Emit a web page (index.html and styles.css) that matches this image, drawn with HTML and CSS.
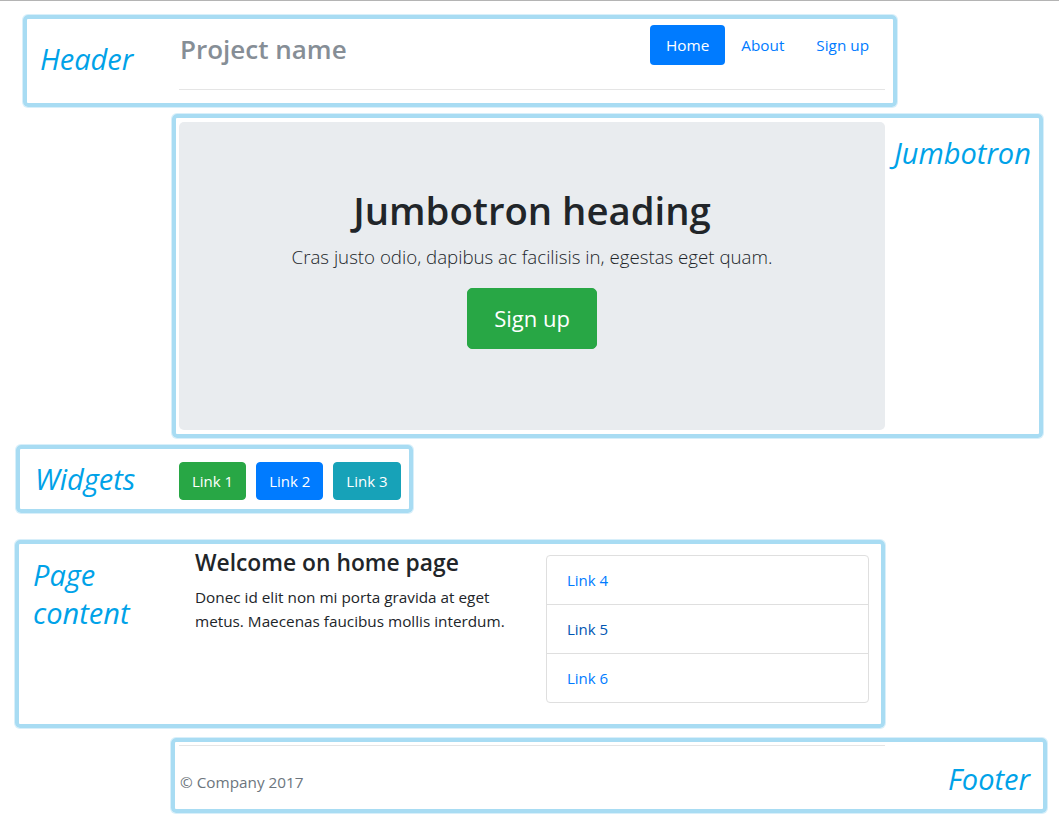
FILE: index.html
```html
<!DOCTYPE html>
<html lang="en">
<head>
<meta charset="utf-8">
<title>Narrow jumbotron layout</title>
<link rel="stylesheet" href="styles.css">
</head>
<body>
<div class="topline"></div>
<div class="container">
  <header class="header">
    <h3 class="brand">Project name</h3>
    <nav class="nav">
      <a class="nav-link active" href="#">Home</a>
      <a class="nav-link" href="#">About</a>
      <a class="nav-link" href="#">Sign up</a>
    </nav>
  </header>

  <section class="jumbotron">
    <h1 class="jumbo-title">Jumbotron heading</h1>
    <p class="lead">Cras justo odio, dapibus ac facilisis in, egestas eget quam.</p>
    <p class="jumbo-action"><a class="btn btn-lg btn-success" href="#">Sign up</a></p>
  </section>

  <section class="widgets">
    <a class="btn btn-success" href="#">Link 1</a>
    <a class="btn btn-primary" href="#">Link 2</a>
    <a class="btn btn-info" href="#">Link 3</a>
  </section>

  <section class="marketing">
    <div class="intro">
      <h4 class="intro-title">Welcome on home page</h4>
      <p class="intro-text">Donec id elit non mi porta gravida at eget metus. Maecenas faucibus mollis interdum.</p>
    </div>
    <div class="list-group">
      <a class="list-item" href="#">Link 4</a>
      <a class="list-item hover" href="#">Link 5</a>
      <a class="list-item" href="#">Link 6</a>
    </div>
  </section>

  <footer class="footer">
    <p>© Company 2017</p>
  </footer>
</div>

<div class="notes">
  <div class="frame frame-header"></div>
  <div class="frame frame-jumbo"></div>
  <div class="frame frame-widgets"></div>
  <div class="frame frame-content"></div>
  <div class="frame frame-footer"></div>
  <span class="label label-header">Header</span>
  <span class="label label-jumbo">Jumbotron</span>
  <span class="label label-widgets">Widgets</span>
  <span class="label label-content">Page<br>content</span>
  <span class="label label-footer">Footer</span>
</div>
</body>
</html>
```

FILE: styles.css
```css
* { box-sizing: border-box; }

html, body {
  margin: 0;
  padding: 0;
  background: #fff;
}

body {
  font-family: "Segoe UI", "Open Sans", "Noto Sans", sans-serif;
  font-size: 16px;
  line-height: 24px;
  color: #212529;
}

a { text-decoration: none; }

.topline {
  height: 1px;
  background: #b4b4b4;
}

.container {
  width: 706px;
  margin-left: 179px;
}

/* Header */
.header {
  display: flex;
  justify-content: space-between;
  align-items: flex-start;
  padding-top: 24px;
  padding-bottom: 16px;
  border-bottom: 1px solid #e5e5e5;
  margin-bottom: 32px;
}

.brand {
  margin: 0 0 0 1px;
  font-size: 26px;
  font-weight: 600;
  line-height: 48px;
  color: #868e96;
}

.nav {
  display: flex;
}

.nav-link {
  display: block;
  padding: 8px 16px;
  font-size: 15.3px;
  line-height: 24px;
  color: #007bff;
  border-radius: 4px;
}

.nav-link.active {
  background: #007bff;
  color: #fff;
}

/* Jumbotron */
.jumbotron {
  background: #e9ecef;
  border-radius: 5px;
  padding: 64px 32px 65px;
  text-align: center;
  margin-bottom: 32px;
}

.jumbo-title {
  margin: 0 0 8px;
  font-size: 38.3px;
  line-height: 48px;
  font-weight: 600;
}

.lead {
  margin: 0 0 16px;
  font-size: 18.7px;
  line-height: 30px;
  font-weight: 300;
}

.jumbo-action {
  margin: 0 0 16px;
  line-height: 0;
}

.btn {
  display: inline-block;
  color: #fff;
  border: 1px solid transparent;
  border-radius: 4px;
  padding: 6px 12px;
  font-size: 15px;
  line-height: 24px;
}

.btn-lg {
  padding: 15px 26px;
  font-size: 22px;
  line-height: 29px;
  border-radius: 5px;
}

.btn-success { background: #28a745; border-color: #28a745; }
.btn-primary { background: #007bff; border-color: #007bff; }
.btn-info { background: #17a2b8; border-color: #17a2b8; }

/* Widgets */
.widgets {
  display: flex;
  gap: 10px;
  margin-bottom: 48px;
}

/* Marketing */
.marketing {
  display: grid;
  grid-template-columns: 1fr 323px;
  gap: 16px;
  padding: 0 16px;
  margin-bottom: 42px;
}

.intro {
  max-width: 320px;
}

.intro-title {
  margin: 0 0 8px;
  font-size: 22.8px;
  line-height: 29px;
  font-weight: 600;
}

.intro-text {
  margin: 0;
  font-size: 15.3px;
  line-height: 24px;
}

.list-group {
  margin-top: 7px;
  border: 1px solid #dfdfdf;
  border-radius: 4px;
  display: flex;
  flex-direction: column;
}

.list-item {
  display: block;
  padding: 12px 20px;
  line-height: 24px;
  font-size: 15px;
  color: #007bff;
  border-top: 1px solid #dfdfdf;
}

.list-item:first-child { border-top: 0; }

.list-item.hover { color: #0056b3; }

/* Footer */
.footer {
  border-top: 1px solid #e5e5e5;
  padding-top: 24px;
  color: #6c757d;
  font-size: 15.3px;
}

.footer p {
  margin: 0 0 16px 1px;
}

/* Annotation overlay */
.frame {
  position: absolute;
  border: 4px solid #a8dcf3;
  border-radius: 5px;
  box-shadow: 0 0 0 1px rgba(168, 220, 243, 0.45);
}

.frame-header  { left: 23px;  top: 15px;  width: 874px; height: 92px; }
.frame-jumbo   { left: 172px; top: 114px; width: 871px; height: 324px; }
.frame-widgets { left: 16px;  top: 445px; width: 397px; height: 68px; }
.frame-content { left: 15px;  top: 540px; width: 870px; height: 188px; }
.frame-footer  { left: 171px; top: 738px; width: 876px; height: 75px; }

.label {
  position: absolute;
  font-style: italic;
  font-size: 29px;
  line-height: 38px;
  color: #00a2e8;
  white-space: nowrap;
}

.label-header  { left: 40px;  top: 40px; }
.label-jumbo   { left: 894px; top: 134px; }
.label-widgets { left: 35px;  top: 460px; }
.label-content { left: 33px;  top: 556px; }
.label-footer  { left: 948px; top: 760px; }
```
